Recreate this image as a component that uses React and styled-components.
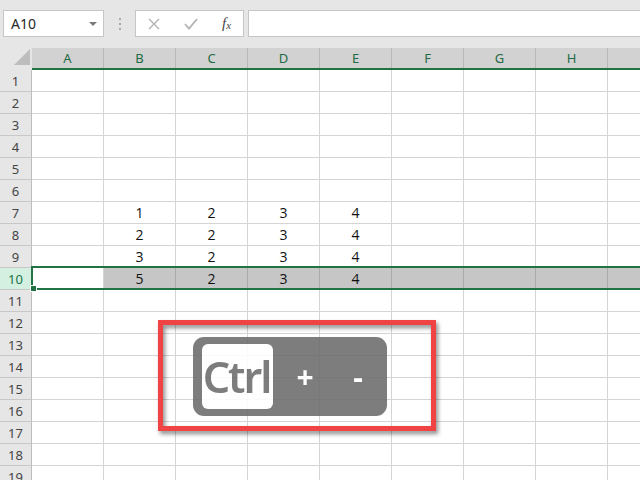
import React from "react";
import styled, { createGlobalStyle } from "styled-components";

const GlobalStyle = createGlobalStyle`
  body {
    margin: 0;
    background: #ffffff;
  }
`;

const COLUMNS = ["A", "B", "C", "D", "E", "F", "G", "H", "I"];
const ROWS = Array.from({ length: 19 }, (_, i) => i + 1);
const DATA = {
  7: ["", "1", "2", "3", "4"],
  8: ["", "2", "2", "3", "4"],
  9: ["", "3", "2", "3", "4"],
  10: ["", "5", "2", "3", "4"],
};
const SELECTED_ROW = 10;

const App = () => {
  return (
    <Screen>
      <GlobalStyle />
      <FormulaBar>
        <NameBox>
          <NameText>A10</NameText>
          <DropArrow />
        </NameBox>
        <Grip>
          <GripDot />
          <GripDot />
          <GripDot />
        </Grip>
        <FxButtons>
          <FxButton>
            <svg width="12" height="12" viewBox="0 0 12 12">
              <path d="M1 1 L11 11 M11 1 L1 11" stroke="#b3b3b3" strokeWidth="1.4" fill="none" />
            </svg>
          </FxButton>
          <FxButton>
            <svg width="14" height="12" viewBox="0 0 14 12">
              <path d="M1 6 L5 10.5 L13 1" stroke="#b3b3b3" strokeWidth="1.8" fill="none" />
            </svg>
          </FxButton>
          <FxLabel>
            f<sub>x</sub>
          </FxLabel>
        </FxButtons>
        <FormulaInput />
      </FormulaBar>

      <Sheet>
        <HeaderRow>
          <Corner>
            <svg width="18" height="17" viewBox="0 0 18 17">
              <polygon points="17,0 17,16 1,16" fill="#bdbdbd" />
            </svg>
          </Corner>
          <ColHeaders>
            {COLUMNS.map((c) => (
              <ColHeader key={c}>{c}</ColHeader>
            ))}
          </ColHeaders>
        </HeaderRow>

        {ROWS.map((r) => {
          const selected = r === SELECTED_ROW;
          const values = DATA[r] || [];
          return (
            <Row key={r}>
              <RowHeader selected={selected}>{r}</RowHeader>
              {COLUMNS.map((c, i) => (
                <Cell key={c} shaded={selected && i > 0}>
                  {values[i] || ""}
                </Cell>
              ))}
            </Row>
          );
        })}

        <Selection>
          <FillHandle />
        </Selection>

        <Callout>
          <CalloutFrame />
          <KeyGroup>
            <CtrlKey>Ctrl</CtrlKey>
            <KeySymbol offset={22}>+</KeySymbol>
            <KeySymbol offset={33}>-</KeySymbol>
          </KeyGroup>
        </Callout>
      </Sheet>
    </Screen>
  );
};

const Screen = styled.div`
  width: 640px;
  height: 480px;
  overflow: hidden;
  background: #ffffff;
  font-family: "Noto Sans", "Open Sans", sans-serif;
`;

const FormulaBar = styled.div`
  height: 48px;
  box-sizing: border-box;
  background: #e6e6e6;
  display: flex;
  align-items: flex-start;
  padding: 10px 0 0 3px;
`;

const NameBox = styled.div`
  width: 101px;
  height: 27px;
  box-sizing: border-box;
  background: #ffffff;
  border: 1px solid #c6c6c6;
  display: flex;
  align-items: center;
  justify-content: space-between;
  padding: 0 6px 0 7px;
`;

const NameText = styled.span`
  font-size: 14px;
  color: #262626;
`;

const DropArrow = styled.span`
  width: 0;
  height: 0;
  border-left: 4px solid transparent;
  border-right: 4px solid transparent;
  border-top: 4px solid #7a7a7a;
`;

const Grip = styled.div`
  width: 31px;
  height: 27px;
  display: flex;
  flex-direction: column;
  align-items: center;
  justify-content: center;
  gap: 3px;
`;

const GripDot = styled.span`
  width: 2px;
  height: 2px;
  background: #a8a8a8;
`;

const FxButtons = styled.div`
  width: 109px;
  height: 27px;
  box-sizing: border-box;
  background: #ffffff;
  border: 1px solid #c6c6c6;
  display: flex;
  align-items: center;
  padding-left: 12px;
`;

const FxButton = styled.div`
  width: 36px;
  display: flex;
  align-items: center;
  justify-content: flex-start;
`;

const FxLabel = styled.span`
  font-family: "Liberation Serif", serif;
  font-style: italic;
  font-size: 15px;
  color: #444444;
  margin-left: 2px;

  sub {
    font-size: 11px;
    vertical-align: baseline;
    position: relative;
    top: 1px;
  }
`;

const FormulaInput = styled.div`
  flex: 1;
  height: 27px;
  box-sizing: border-box;
  margin-left: 4px;
  background: #ffffff;
  border: 1px solid #c6c6c6;
  border-right: none;
`;

const Sheet = styled.div`
  position: relative;
`;

const HeaderRow = styled.div`
  display: flex;
  height: 22px;
`;

const Corner = styled.div`
  width: 32px;
  flex-shrink: 0;
  background: #e6e6e6;
  display: flex;
  align-items: flex-end;
  justify-content: flex-end;
  padding: 0 1px 4px 0;
  box-sizing: border-box;
`;

const ColHeaders = styled.div`
  display: flex;
  border-bottom: 2px solid #217346;
`;

const ColHeader = styled.div`
  width: 72px;
  flex-shrink: 0;
  box-sizing: border-box;
  background: #d2d2d2;
  border-right: 1px solid #b8b8b8;
  display: flex;
  align-items: center;
  justify-content: center;
  font-size: 13px;
  color: #1f6a42;
`;

const Row = styled.div`
  display: flex;
  height: 22px;
`;

const RowHeader = styled.div`
  width: 32px;
  flex-shrink: 0;
  box-sizing: border-box;
  background: ${(p) => (p.selected ? "#d3f0e0" : "#e6e6e6")};
  color: ${(p) => (p.selected ? "#217346" : "#444444")};
  border-right: 1px solid #bcbcbc;
  border-bottom: 1px solid #c8c8c8;
  display: flex;
  align-items: center;
  justify-content: center;
  font-size: 13px;
`;

const Cell = styled.div`
  width: 72px;
  flex-shrink: 0;
  box-sizing: border-box;
  background: ${(p) => (p.shaded ? "#c6c6c6" : "#ffffff")};
  border-right: 1px solid ${(p) => (p.shaded ? "#ababab" : "#d4d4d4")};
  border-bottom: 1px solid #d4d4d4;
  display: flex;
  align-items: center;
  justify-content: center;
  font-family: "Open Sans", sans-serif;
  font-size: 14px;
  color: #111111;
`;

const Selection = styled.div`
  position: absolute;
  left: 31px;
  right: -4px;
  top: ${22 + 9 * 22 - 2}px;
  height: 24px;
  box-sizing: border-box;
  border: 2px solid #217346;
  pointer-events: none;
`;

const FillHandle = styled.div`
  position: absolute;
  left: -3px;
  bottom: -4px;
  width: 5px;
  height: 5px;
  background: #217346;
  border: 1px solid #ffffff;
`;

const Callout = styled.div`
  position: absolute;
  left: 158px;
  top: ${320 - 48}px;
  width: 278px;
  height: 111px;
  box-sizing: border-box;
  padding: 17px 0 0 35px;
`;

const CalloutFrame = styled.div`
  position: absolute;
  inset: 0;
  border: 5px solid #f04343;
  filter: drop-shadow(2px 3px 2px rgba(0, 0, 0, 0.45));
`;

const KeyGroup = styled.div`
  position: relative;
  width: 194px;
  height: 79px;
  box-sizing: border-box;
  background: #6f6f6f;
  border-radius: 11px;
  opacity: 0.9;
  display: flex;
  align-items: center;
  padding: 0 9px;
`;

const CtrlKey = styled.div`
  width: 71px;
  height: 65px;
  box-sizing: border-box;
  background: #ffffff;
  border-radius: 6px;
  display: flex;
  align-items: center;
  justify-content: center;
  font-size: 43px;
  font-weight: 600;
  letter-spacing: -2px;
  color: #6f6f6f;
  padding-right: 2px;
`;

const KeySymbol = styled.div`
  width: 20px;
  margin-left: ${(p) => p.offset}px;
  text-align: center;
  font-size: 30px;
  font-weight: 700;
  color: #ffffff;
`;

export default App;
